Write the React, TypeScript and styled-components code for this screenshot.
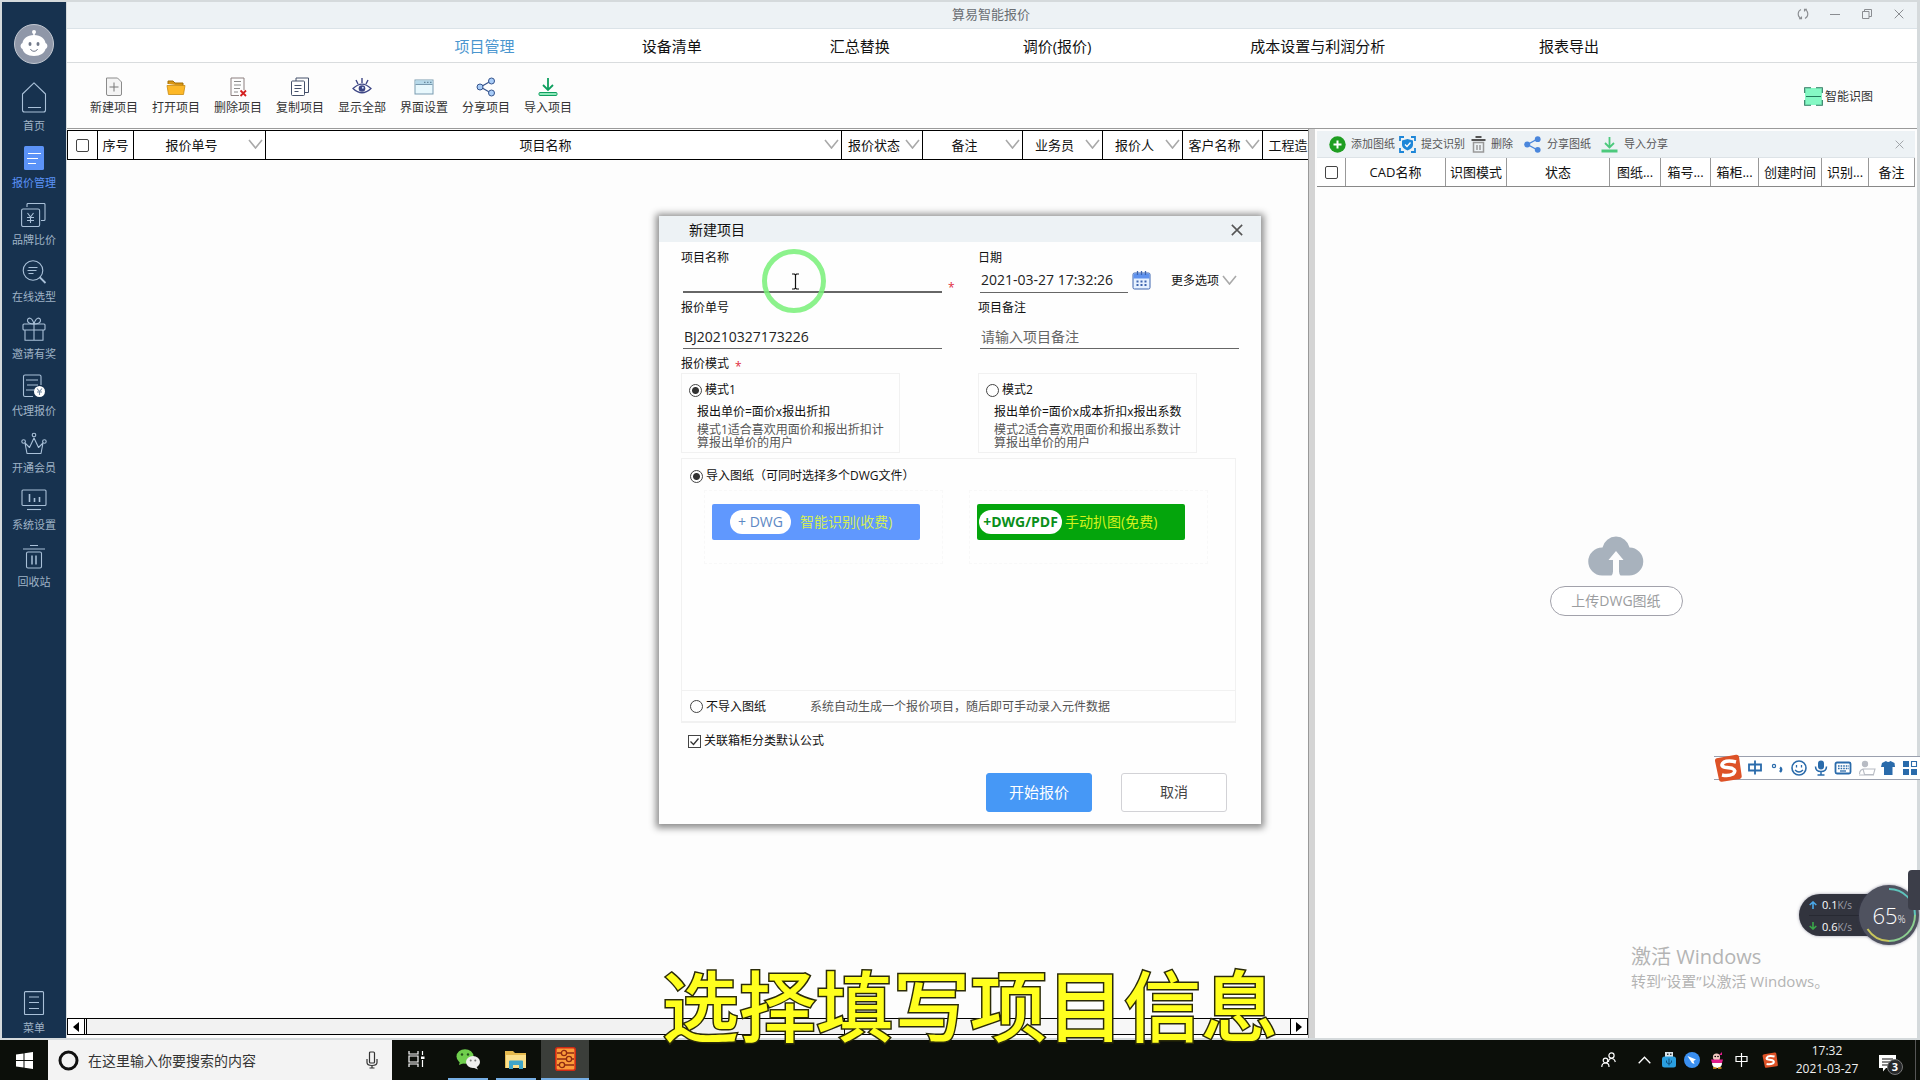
import React, { useState } from 'react';
import styled, { createGlobalStyle, css } from 'styled-components';

const GlobalStyle = createGlobalStyle`
  * { box-sizing: border-box; }
  html, body { margin: 0; padding: 0; }
  body, button, input, table {
    font-family: "Open Sans", "Noto Sans CJK SC", sans-serif;
    font-size: 12px;
    color: #111;
  }
  button { border: 0; padding: 0; background: none; cursor: pointer; }
  svg { display: block; flex: none; }
`;

/* ---------- page frame ---------- */

const Screen = styled.div`
  position: relative;
  display: flex;
  flex-direction: column;
  height: 100vh;
  overflow: hidden;
  background: #fdfdfd;
`;

const AppWindow = styled.div`
  flex: 1;
  min-height: 0;
  display: flex;
  border: 2px solid #d5dadc;
  border-right-width: 3px;
`;

const Main = styled.div`
  flex: 1;
  min-width: 0;
  display: flex;
  flex-direction: column;
  border-left: 1px solid #d5dadc;
`;

/* ---------- sidebar ---------- */

const Sidebar = styled.aside`
  width: 64px;
  display: flex;
  flex-direction: column;
  align-items: center;
  background: #17324f;
  padding: 22px 0 2px;
`;

const NavList = styled.nav`
  flex: 1;
  display: flex;
  flex-direction: column;
  align-items: center;
  margin-top: 13px;
`;

const NavItem = styled.a<{ $active?: boolean; $bottom?: boolean }>`
  height: 57px;
  width: 64px;
  display: flex;
  flex-direction: column;
  align-items: center;
  justify-content: flex-end;
  gap: 5px;
  text-decoration: none;
  font-size: 11px;
  line-height: 16px;
  color: ${(p) => (p.$active ? '#5b93f8' : '#9fb2c6')};
  ${(p) => p.$bottom && css`margin-top: auto;`}
`;

/* ---------- title, tabs, toolbar ---------- */

const TitleBar = styled.header`
  height: 27px;
  display: grid;
  grid-template-columns: 1fr auto 1fr;
  align-items: center;
  padding: 0 2px 2px 0;
  background: #edf2f5;
  border-bottom: 1px solid #dbe3e8;
`;

const AppTitle = styled.h1`
  grid-column: 2;
  margin: 0;
  font-size: 13px;
  font-weight: 400;
  line-height: 18px;
  color: #6a6e73;
`;

const WindowControls = styled.div`
  display: flex;
  justify-content: flex-end;
  color: #8a8d91;
`;

const WindowButton = styled.button`
  width: 32px;
  height: 24px;
  display: grid;
  place-items: center;
  color: inherit;
`;

const Tabs = styled.nav`
  height: 34px;
  display: grid;
  grid-template-columns: 324fr 186fr 188fr 188fr 206fr 315fr 187fr 254fr;
  align-items: center;
  border-bottom: 1px solid #d9dcde;
  background: #fff;
`;

const Tab = styled.a<{ $active?: boolean }>`
  text-align: center;
  text-decoration: none;
  font-size: 15px;
  line-height: 22px;
  color: ${(p) => (p.$active ? '#4a96cf' : '#111')};
  &:first-child { grid-column: 2; }
`;

const Toolbar = styled.div`
  height: 66px;
  display: flex;
  align-items: center;
  padding: 2px 44px 0 16px;
  border-bottom: 1px solid #9a9a9a;
`;

const ToolButton = styled.button`
  width: 62px;
  display: flex;
  flex-direction: column;
  align-items: center;
  gap: 2px;
  line-height: 17px;
  color: #333;
`;

const RecognizeButton = styled.button`
  margin-left: auto;
  display: flex;
  align-items: center;
  gap: 2px;
  line-height: 18px;
  color: #333;
`;

/* ---------- workspace ---------- */

const Workspace = styled.div`
  flex: 1;
  min-height: 0;
  display: flex;
`;

const ListPane = styled.section`
  flex: 1;
  min-width: 0;
  display: flex;
  flex-direction: column;
  justify-content: space-between;
  padding-top: 1px;
  overflow: hidden;
`;

const Splitter = styled.div`
  width: 7px;
  background: #d4d4d4;
  border-left: 1px solid #999;
`;

const ProjectTable = styled.table`
  width: calc(100% + 35px);
  table-layout: fixed;
  border-collapse: separate;
  border-spacing: 0;
  border: solid #000;
  border-width: 1px 0 1px 1px;
  background: #fff;
`;

const ProjectHead = styled.th<{ $filter?: boolean }>`
  position: relative;
  height: 28px;
  padding: 0 ${(p) => (p.$filter ? 16 : 0)}px 0 0;
  border-right: 1px solid #000;
  font-size: 13px;
  font-weight: 400;
  line-height: 18px;
  white-space: nowrap;
`;

const FilterButton = styled.button`
  position: absolute;
  right: 2px;
  top: 8px;
`;

const Check = styled.input.attrs({ type: 'checkbox' })<{ $square?: boolean }>`
  appearance: none;
  display: block;
  flex: none;
  width: 13px;
  height: 13px;
  margin: 0 ${(p) => (p.$square ? '0' : 'auto')};
  border: 1px solid #444;
  border-radius: ${(p) => (p.$square ? 0 : 2)}px;
  background: #fff;
`;

const TickBox = styled.span`
  display: grid;
  & > * { grid-area: 1 / 1; }
  svg { pointer-events: none; z-index: 1; }
`;

const ScrollBar = styled.div`
  display: flex;
  height: 17px;
  margin-bottom: 3px;
  border-top: 1px solid #000;
  border-bottom: 1px solid #000;
  background: #f1f1f1;
`;

const ScrollButton = styled.button`
  width: 18px;
  display: grid;
  place-items: center;
  border: solid #000;
  border-width: 0 1px;
  background: #fff;
`;

const ScrollTrack = styled.div`
  flex: 1;
  background: #f7f7f7;
`;

const ScrollThumb = styled.div`
  width: 63%;
  height: 100%;
  margin-left: 1px;
  border: solid #000;
  border-width: 0 1px;
  background: #f2f2f2;
`;

const DrawingPane = styled.section`
  width: 602px;
  display: flex;
  flex-direction: column;
  padding: 2px 2px 0 2px;
`;

const DrawingBar = styled.div`
  height: 27px;
  display: flex;
  align-items: center;
  padding: 0 8px 0 12px;
  background: #edf2f5;
  border-bottom: 1px solid #dde3e7;
`;

const DrawingTool = styled.button<{ $width: number; $gap: number }>`
  width: ${(p) => p.$width}px;
  display: flex;
  align-items: center;
  gap: ${(p) => p.$gap}px;
  font-size: 11px;
  line-height: 16px;
  white-space: nowrap;
  color: #555;
`;

const CloseButton = styled.button`
  margin-left: auto;
  width: 16px;
  height: 16px;
  display: grid;
  place-items: center;
`;

const DrawingTable = styled.table`
  width: 100%;
  table-layout: fixed;
  border-spacing: 0;
  border-bottom: 1px solid #888;
  background: #fff;
`;

const DrawingHead = styled.th`
  height: 28px;
  padding: 0;
  border-right: 1px solid #999;
  font-size: 13px;
  font-weight: 400;
  line-height: 18px;
  white-space: nowrap;
`;

const UploadArea = styled.div`
  flex: 1;
  display: flex;
  flex-direction: column;
  align-items: center;
  justify-content: center;
  gap: 10px;
  padding-bottom: 76px;
`;

const UploadButton = styled.button`
  width: 133px;
  height: 30px;
  border: 1px solid #a2a2ab;
  border-radius: 15px;
  background: #fff;
  font-size: 14px;
  line-height: 20px;
  color: #9b9da0;
`;

/* ---------- dialog ---------- */

const Overlay = styled.div`
  position: absolute;
  inset: 0 0 40px;
  display: grid;
  place-items: center;
  pointer-events: none;
`;

const Dialog = styled.section`
  width: 602px;
  background: #fefefe;
  box-shadow: 0 1px 7px 3px rgba(0, 0, 0, 0.45);
  pointer-events: auto;
`;

const DialogHeader = styled.header`
  height: 26px;
  display: flex;
  align-items: center;
  padding: 2px 16px 0 30px;
  background: #edf2f5;
`;

const DialogTitle = styled.h2`
  margin: 0;
  font-size: 14px;
  font-weight: 400;
  line-height: 20px;
`;

const DialogBody = styled.form`
  padding: 8px 22px 12px;
  line-height: 16px;
`;

const FieldGrid = styled.div`
  display: grid;
  grid-template-columns: 297px 1fr;
  row-gap: 7px;
`;

const Field = styled.div`
  display: flex;
  flex-direction: column;
`;

const FieldLabel = styled.label`
  line-height: 16px;
`;

const FieldRow = styled.div`
  display: flex;
  align-items: center;
  padding-left: 2px;
`;

const TextInput = styled.input<{ $width: number; $tall?: boolean; $strong?: boolean }>`
  width: ${(p) => p.$width}px;
  height: ${(p) => (p.$tall ? 33 : 27)}px;
  padding: ${(p) => (p.$tall ? 8 : 0)}px 1px 0;
  border: 0;
  border-bottom: ${(p) => (p.$strong ? 2 : 1)}px solid #666;
  outline: 0;
  background: transparent;
  font-size: 14px;
  color: #222;
  &::placeholder { color: #666; opacity: 1; }
`;

const Required = styled.span`
  display: inline-block;
  align-self: flex-end;
  height: 16px;
  padding: 0 6px;
  line-height: 22px;
  vertical-align: top;
  color: #e02a3c;
`;

const CalendarButton = styled.button`
  margin-left: 4px;
`;

const MoreButton = styled.button`
  display: flex;
  align-items: center;
  gap: 3px;
  margin-left: 20px;
`;

const ModeTitle = styled.div`
  margin-top: 7px;
`;

const ModeGrid = styled.div`
  display: grid;
  grid-template-columns: 219px 219px;
  column-gap: 78px;
  margin-top: 1px;
`;

const ModeCard = styled.div`
  height: 80px;
  padding: 8px 7px 0;
  border: 1px solid #f1f1f1;
`;

const Choice = styled.label`
  display: flex;
  align-items: center;
  gap: 3px;
  line-height: 16px;
  white-space: nowrap;
`;

const Radio = styled.input.attrs({ type: 'radio' })`
  appearance: none;
  flex: none;
  width: 13px;
  height: 13px;
  margin: 0;
  border: 1px solid #444;
  border-radius: 50%;
  background: #fff;
  &:checked { background: radial-gradient(circle, #333 3px, #fff 4px); }
`;

const Formula = styled.p`
  margin: 6px 0 3px 8px;
  white-space: nowrap;
`;

const ModeHint = styled.p`
  margin: 0 0 0 8px;
  line-height: 13px;
  color: #555;
`;

const SourceCard = styled.div`
  width: 555px;
  margin-top: 5px;
  border: 1px solid #f1f1f1;
  border-bottom-width: 2px;
`;

const ImportSection = styled.div`
  height: 231px;
  padding: 9px 0 0 8px;
`;

const DropGrid = styled.div`
  display: grid;
  grid-template-columns: 239px 239px;
  column-gap: 26px;
  margin: 6px 0 0 14px;
`;

const DropZone = styled.div`
  padding: 13px 7px 23px;
  border: 1px dashed #f8f8f8;
`;

const ImportButton = styled.button<{ $free?: boolean }>`
  width: 208px;
  height: 36px;
  display: flex;
  align-items: center;
  gap: ${(p) => (p.$free ? 3 : 9)}px;
  padding-left: ${(p) => (p.$free ? 2 : 18)}px;
  border-radius: 2px;
  background: ${(p) => (p.$free ? '#04a50c' : '#6098fe')};
  font-size: 14px;
  line-height: 20px;
  white-space: nowrap;
  color: ${(p) => (p.$free ? '#d4f21c' : '#d3ee55')};
`;

const Pill = styled.span<{ $free?: boolean }>`
  width: ${(p) => (p.$free ? 83 : 61)}px;
  height: 24px;
  border-radius: 12px;
  background: #fff;
  font-size: 14px;
  font-weight: ${(p) => (p.$free ? 700 : 400)};
  line-height: 24px;
  text-align: center;
  color: ${(p) => (p.$free ? '#0a8f1a' : '#5d88c4')};
`;

const SkipSection = styled.div`
  height: 31px;
  display: flex;
  align-items: center;
  gap: 44px;
  padding: 1px 0 0 8px;
  border-top: 1px solid #f1f1f1;
`;

const SkipHint = styled.span`
  color: #555;
`;

const LinkRow = styled.div`
  margin: 10px 0 0 7px;
`;

const Actions = styled.div`
  display: flex;
  justify-content: flex-end;
  gap: 29px;
  margin-top: 24px;
  padding-right: 12px;
`;

const ActionButton = styled.button<{ $primary?: boolean }>`
  width: 106px;
  height: 39px;
  padding-bottom: 1px;
  border: 1px solid ${(p) => (p.$primary ? '#4698f6' : '#d2d2d6')};
  border-radius: 3px;
  background: ${(p) => (p.$primary ? '#4698f6' : '#fff')};
  font-size: ${(p) => (p.$primary ? 15 : 14)}px;
  line-height: 20px;
  color: ${(p) => (p.$primary ? '#fff' : '#444')};
`;

/* ---------- floating things on the desktop ---------- */

const PointerRing = styled.div`
  position: absolute;
  left: calc(50% - 198px);
  top: calc(50% - 291px);
  width: 64px;
  height: 64px;
  display: grid;
  place-items: center;
  padding-left: 3px;
  border: 5px solid rgba(120, 240, 120, 0.85);
  border-radius: 50%;
  pointer-events: none;
`;

const ImeBar = styled.div`
  position: absolute;
  right: 0;
  top: 756px;
  height: 24px;
  display: flex;
  align-items: center;
  gap: 5px;
  padding: 0 1px 0 0;
  border: solid #9aa0ae;
  border-width: 1px 0;
  background: #fff;
  color: #2a6bab;
`;

const SpeedWidget = styled.div`
  position: absolute;
  right: 1px;
  top: 885px;
  display: flex;
  align-items: center;
`;

const SpeedPanel = styled.div`
  width: 88px;
  height: 42px;
  margin-right: -28px;
  padding: 0 0 0 10px;
  border-radius: 21px 0 0 21px;
  background: #32343e;
  box-shadow: 0 0 3px rgba(60, 60, 90, 0.5);
`;

const SpeedLine = styled.div`
  display: flex;
  align-items: center;
  gap: 5px;
  height: 21px;
  font-size: 11px;
  color: #fff;
  & + & { border-top: 1px solid #272932; }
`;

const SpeedUnit = styled.span`
  font-size: 10px;
  color: #9c9ea8;
`;

const LoadDial = styled.div`
  position: relative;
  width: 60px;
  height: 60px;
  display: flex;
  align-items: center;
  justify-content: center;
  border-radius: 50%;
  background: #4f525f;
  color: #fff;
  font-size: 22px;
  font-weight: 300;
  box-shadow: 0 0 3px rgba(60, 60, 90, 0.6);
  svg { position: absolute; inset: 0; }
  small { font-size: 10px; padding-top: 8px; }
`;

const EdgeTab = styled.div`
  position: absolute;
  right: 0;
  top: 870px;
  width: 12px;
  height: 40px;
  border-radius: 4px 0 0 4px;
  background: #3c3e49;
`;

const Watermark = styled.div`
  position: absolute;
  right: 88px;
  bottom: 88px;
  width: 201px;
  font-size: 15px;
  line-height: 22px;
  white-space: nowrap;
  color: #b4b4b4;
`;

const WatermarkTitle = styled.div`
  font-size: 20px;
  line-height: 26px;
`;

const Subtitle = styled.p`
  position: absolute;
  left: 0;
  right: 0;
  bottom: 23px;
  margin: 0;
  padding-left: 20px;
  font-family: "Noto Sans CJK SC", sans-serif;
  font-size: 77px;
  font-weight: 500;
  line-height: 108px;
  text-align: center;
  color: #ffff1e;
  -webkit-text-stroke: 3px #2b2b08;
  paint-order: stroke fill;
  pointer-events: none;
`;

/* ---------- taskbar ---------- */

const Taskbar = styled.footer`
  height: 40px;
  display: flex;
  background: #0c0f0a;
  color: #fff;
`;

const StartButton = styled.button`
  width: 48px;
  display: grid;
  place-items: center;
`;

const SearchBox = styled.label`
  width: 344px;
  display: flex;
  align-items: center;
  gap: 9px;
  padding: 0 14px 0 10px;
  background: #f3f3f3;
`;

const SearchInput = styled.input`
  flex: 1;
  min-width: 0;
  padding: 0;
  border: 0;
  background: transparent;
  font-size: 14px;
  &::placeholder { color: #333; opacity: 1; }
`;

const TaskButton = styled.button<{ $state?: 'open' | 'active' }>`
  width: ${(p) => (p.$state === 'open' ? 40 : 48)}px;
  margin-left: ${(p) => (p.$state === 'open' ? 8 : p.$state ? 5 : 0)}px;
  display: grid;
  place-items: center;
  border-bottom: 2px solid ${(p) => (p.$state ? '#76aee4' : 'transparent')};
  background: ${(p) => (p.$state === 'active' ? '#3b3e3a' : 'transparent')};
`;

const Tray = styled.div`
  margin-left: auto;
  display: flex;
  align-items: center;
`;

const TrayButton = styled.button<{ $width: number }>`
  width: ${(p) => p.$width}px;
  height: 40px;
  display: grid;
  place-items: center;
  color: #fff;
`;

const Clock = styled.time`
  width: 90px;
  font-size: 12px;
  line-height: 18px;
  text-align: center;
  color: #f0f0f0;
`;

const Notice = styled.button`
  position: relative;
  width: 43px;
  height: 40px;
  padding: 8px 0 0 7px;
`;

const Badge = styled.span`
  position: absolute;
  left: 15px;
  top: 19px;
  width: 16px;
  height: 16px;
  border: 1px solid #777;
  border-radius: 50%;
  background: #26282a;
  font-size: 11px;
  font-weight: 700;
  line-height: 14px;
  color: #fff;
`;

const DesktopEdge = styled.div`
  width: 5px;
  height: 40px;
  border-left: 1px solid #555;
`;

/* ---------- drawings ---------- */

const Chevron = () => (
  <svg width="15" height="10" viewBox="0 0 15 10" fill="none" stroke="#a9a9a9" strokeWidth="1.6">
    <path d="M1 1 7.5 9 14 1" />
  </svg>
);

const Cross = ({ size, color, width }: { size: number; color: string; width: number }) => (
  <svg width={size} height={size} viewBox="0 0 10 10" stroke={color} strokeWidth={width}>
    <path d="M.7.7 9.3 9.3M9.3.7.7 9.3" />
  </svg>
);

const Robot = () => (
  <svg width="40" height="40" viewBox="0 0 40 40">
    <circle cx="20" cy="20" r="19.5" fill="#8f97a8" stroke="#c3c9d2" />
    <path d="M20 8v6" stroke="#fff" strokeWidth="1.6" />
    <circle cx="20" cy="8" r="2" fill="#fff" />
    <path d="M20 11c7 0 11 4 11.500 8 2.500 1 2.500 5 0 6-1 4-5 7-11.500 7S9.500 29 8.500 25c-2.500-1-2.500-5 0-6C9 15 13 11 20 11z" fill="#fff" />
    <ellipse cx="16" cy="20" rx="1.500" ry="2" fill="#6f7788" />
    <ellipse cx="24" cy="20" rx="1.500" ry="2" fill="#6f7788" />
    <path d="M16.500 25c1 3 6 3 7 0" fill="none" stroke="#6f7788" />
  </svg>
);

const NavSvg = ({ children, h = 24 }: { children: React.ReactNode; h?: number }) => (
  <svg width="26" height={h} viewBox={`0 0 26 ${h}`} fill="none" stroke="#a9c0d8" strokeWidth="1.1" strokeLinejoin="round">
    {children}
  </svg>
);

const navItems = [
  {
    label: '首页',
    icon: <NavSvg h={31}><path d="M1.500 12 13 .8 24.500 12v16q0 2-2 2h-19q-2 0-2-2zM7 25.500h13" /></NavSvg>,
  },
  {
    label: '报价管理',
    active: true,
    icon: (
      <NavSvg>
        <rect x="3" y="0" width="20" height="24" rx="1.500" fill="#5b93f8" stroke="none" />
        <path d="M7 7.500h13M6 12.500h11M7 17.500h8" stroke="#fff" />
      </NavSvg>
    ),
  },
  {
    label: '品牌比价',
    icon: <NavSvg><path d="M6 4V1.500q0-1 1-1h16q1 0 1 1v15q0 1-1 1h-3" /><rect x=".6" y="6" width="18" height="17.500" rx="1.500" /><path d="M6.500 10l3 4 3-4M9.500 14v6M6 14.500h7M6 17.500h7" /></NavSvg>,
  },
  {
    label: '在线选型',
    icon: <NavSvg><circle cx="12" cy="10.500" r="9.800" /><path d="M7.500 7.500h9M6.500 10.500h9M7.500 13.500h5" /><path d="M18.500 17l6 6" strokeWidth="1.800" /></NavSvg>,
  },
  {
    label: '邀请有奖',
    icon: <NavSvg><rect x="2" y="7" width="22" height="6" rx="1" /><path d="M4 13v10.300h18V13M13 7v16.300M13 7C9 7 6 5.500 6.500 3S11-.5 13 7M13 7c4 0 7-1.500 6.500-4S15-.5 13 7" /></NavSvg>,
  },
  {
    label: '代理报价',
    icon: <NavSvg><path d="M12 22.500H4q-1.500 0-1.500-1.500V2.500Q2.500 1 4 1h14.500Q20 1 20 2.500V11" /><path d="M5 6h12M6 11h11M5 16h8" /><circle cx="18.500" cy="17.500" r="5.500" fill="#fff" stroke="none" /><path d="M16 14.500l2.500 3 2.500-3M18.500 17v4M16 18h5" stroke="#7288a0" /></NavSvg>,
  },
  {
    label: '开通会员',
    icon: <NavSvg h={23}><circle cx="13" cy="3" r="1.800" /><circle cx="2.600" cy="9.500" r="1.800" /><circle cx="23.400" cy="9.500" r="1.800" /><path d="M4 11l2 10.500h14L22 11l-4.500 4.500L13 6l-4.500 9.500z" /></NavSvg>,
  },
  {
    label: '系统设置',
    icon: <NavSvg><rect x="1" y="2" width="24" height="15.500" rx="1" /><path d="M6 21.500h14" /><path d="M8.500 6v8M13.500 10v4M18.500 9v5" strokeWidth="1.600" /></NavSvg>,
  },
  {
    label: '回收站',
    icon: <NavSvg h={25}><path d="M9 1.500h8M2 5h22" /><rect x="5.500" y="8" width="15" height="16" rx="1.500" /><path d="M11 11.500v9M15 11.500v9" strokeWidth="1.500" /></NavSvg>,
  },
];

const MenuIcon = () => (
  <NavSvg><rect x="3.500" y=".6" width="19" height="23" rx="1" /><path d="M8 6h10M8 11.500h10M8 17.500h10" /></NavSvg>
);

const ToolSvg = ({ children }: { children: React.ReactNode }) => (
  <svg width="20" height="20" viewBox="0 0 20 20" fill="none">{children}</svg>
);

const toolItems = [
  { label: '新建项目', icon: <ToolSvg><path d="M2.500 1h11l4 4v12q0 1.500-1.500 1.500H4q-1.500 0-1.500-1.500z" fill="#f4f4f4" stroke="#8b8b8b" /><path d="M10 5.500v9M5.500 10h9" stroke="#777" /></ToolSvg> },
  { label: '打开项目', icon: <ToolSvg><path d="M2 7V4h5l2 2h8v3" fill="#d99512" stroke="#a06e08" /><path d="M1 8.500h18L17.500 17.500h-15z" fill="#fdb827" stroke="#c78a10" strokeWidth=".8" /></ToolSvg> },
  { label: '删除项目', icon: <ToolSvg><path d="M3 1h13v12M11 18.500H3V1" stroke="#8b7f7f" /><path d="M6 4.500h7M6 8h7M6 11.500h6M6 15h4" stroke="#8b8b8b" /><path d="M12.500 13.500l5.500 5.500M18 13.500l-5.500 5.500" stroke="#d42020" strokeWidth="1.800" /></ToolSvg> },
  { label: '复制项目', icon: <ToolSvg><path d="M6 4V1h12.500v14.500H15" stroke="#44506a" /><rect x="1.500" y="4" width="13" height="14.500" rx="1" fill="#fff" stroke="#44506a" /><path d="M4.500 8.500h7M4.500 11.500h7M4.500 14.500h4" stroke="#44506a" /></ToolSvg> },
  { label: '显示全部', icon: <ToolSvg><path d="M1 11.500Q10 2.500 19 11.500 10 20 1 11.500z" stroke="#3c4584" strokeWidth="1.200" /><circle cx="10" cy="11.500" r="3.300" fill="#3c4584" /><circle cx="10.800" cy="10.800" r="1" fill="#cfe0ff" /><path d="M10 1v5M4 3l2 4M16 3l-2 4" stroke="#3c4584" strokeWidth="1.400" /></ToolSvg> },
  { label: '界面设置', icon: <ToolSvg><rect x="1" y="3" width="18" height="14" fill="#e8f8fd" stroke="#7a9bb0" /><path d="M1.500 7.500h17" stroke="#7a9bb0" /><rect x="1.500" y="3.500" width="17" height="3.500" fill="#b6d9ea" /><path d="M10 5.300h1.500M13 5.300h1.500M16 5.300h1.500" stroke="#55758a" /></ToolSvg> },
  { label: '分享项目', icon: <ToolSvg><path d="M15 4 4.500 10 15 16" stroke="#35538c" strokeWidth="1.200" /><circle cx="15.500" cy="4" r="3" fill="#a9cdf8" stroke="#35538c" /><circle cx="4" cy="10" r="3" fill="#a9cdf8" stroke="#35538c" /><circle cx="15.500" cy="16" r="3" fill="#a9cdf8" stroke="#35538c" /></ToolSvg> },
  { label: '导入项目', icon: <ToolSvg><path d="M10 1v11M5 8l5 5 5-5" stroke="#0f9f5f" strokeWidth="1.800" /><rect x="1" y="15.500" width="18" height="3" rx="1" fill="#8fe8bb" stroke="#0f9f5f" /></ToolSvg> },
];

const drawingTools = [
  { label: '添加图纸', width: 70, gap: 5, icon: <svg width="17" height="17" viewBox="0 0 17 17"><circle cx="8.500" cy="8.500" r="8.200" fill="#1f9e22" /><path d="M8.500 4.500v8M4.500 8.500h8" stroke="#fff" strokeWidth="2" /></svg> },
  { label: '提交识别', width: 72, gap: 5, icon: <svg width="17" height="17" viewBox="0 0 17 17" fill="none" stroke="#1d86d8" strokeWidth="1.800"><path d="M1 5V1h4M12 1h4v4M16 12v4h-4M5 16H1v-4" /><path d="M8.500 3l5.500 1.500v4.500q0 3-5.500 5.500Q3 12 3 9V4.500z" fill="#1d86d8" stroke="none" /><path d="M6 8.500l2 2 3.500-4" stroke="#fff" strokeWidth="1.300" /></svg> },
  { label: '删除', width: 53, gap: 5, icon: <svg width="15" height="17" viewBox="0 0 15 17" fill="none"><path d="M4.500 1h6M.5 4h14" stroke="#555" strokeWidth="1.800" /><path d="M2.500 6.500h10V16h-10zM6 9v5M9 9v5" stroke="#999" strokeWidth="1.500" /></svg> },
  { label: '分享图纸', width: 77, gap: 6, icon: <svg width="17" height="17" viewBox="0 0 17 17"><path d="M13.500 3 3.500 8.500l10 5.500" fill="none" stroke="#4a86dc" strokeWidth="1.400" /><circle cx="13.700" cy="3.200" r="2.900" fill="#4a86dc" /><circle cx="3.200" cy="8.500" r="3" fill="#4a86dc" /><circle cx="13.700" cy="13.800" r="2.900" fill="#4a86dc" /></svg> },
  { label: '导入分享', width: 70, gap: 6, icon: <svg width="17" height="17" viewBox="0 0 17 17" fill="none" stroke="#4cc97c"><path d="M8.500 1v10M4 7l4.500 4.500L13 7" strokeWidth="1.800" /><path d="M.5 15h16" strokeWidth="3" /></svg> },
];

const RecognizeIcon = () => (
  <svg width="19" height="19" viewBox="0 0 19 19">
    <rect x="1" y="1" width="17" height="17" rx="1.500" fill="#85f8c4" />
    <path d="M.7 6V.7H7M12 .7h6.300V6M18.300 13v5.300H12M7 18.300H.7V13M2 9.500h15" fill="none" stroke="#237a5b" strokeWidth="1.100" />
  </svg>
);

const Cloud = () => (
  <svg width="56" height="43" viewBox="0 0 56 43">
    <path d="M14.500 14.500A13.800 13.800 0 0 1 41.500 14.500 14 14 0 0 1 41 42.500h-8.500q-1.500-2-1.500-4V27h4.500L28 18l-7.500 9H25v11.500q0 2-1.500 4H14A14 14 0 0 1 14.500 14.500z" fill="#a8b2bd" />
  </svg>
);

const Calendar = () => (
  <svg width="19" height="20" viewBox="0 0 19 20">
    <rect x="1" y="3" width="17" height="16" rx="1.500" fill="#e6f1ff" stroke="#3d64ae" />
    <rect x="1.500" y="3.500" width="16" height="5" fill="#5f92ee" />
    <path d="M5.500 1v4M9.500 1v4M13.500 1v4" stroke="#3d64ae" strokeWidth="1.300" />
    <path d="M4.500 11.500h10M4.500 15h10" stroke="#3d64ae" strokeWidth="1.800" strokeDasharray="2 2" />
  </svg>
);

const SogouMark = ({ size }: { size: number }) => (
  <svg width={size} height={size} viewBox="0 0 28 28">
    <path d="M4 4 22 .8q2.500-.4 3 2L27.700 22q.3 2.500-2 3L8 27.700q-2.500.4-3-2L1 7q-.4-2.500 3-3z" fill="#dd5227" />
    <path d="M22 8Q14 6 10 8.200 5.500 12 11 13.300L18 14.300q5 2 1 5.700-4.500 2.500-11 1" fill="none" stroke="#fff" strokeWidth="3.600" />
  </svg>
);

const ImeIcons = () => (
  <svg width="172" height="20" viewBox="0 0 172 20" fill="none" stroke="#2a6bab" strokeWidth="1.800">
    <path d="M2 6.500h12v6H2zM8 2.500v14" />
    <circle cx="27" cy="8" r="1.600" strokeWidth="1.200" /><path d="M33 9.500q2.500 1.500 0 4.500" strokeWidth="2.400" />
    <circle cx="52" cy="10" r="7" strokeWidth="1.600" /><path d="M49.500 7v2.500M54.500 7v2.500M48 12q4 4 8 0" strokeWidth="1.300" />
    <rect x="71" y="2.500" width="6" height="9" rx="3" fill="#2a6bab" stroke="none" /><path d="M68.500 8.500q0 5 5.500 5t5.500-5M74 13v4M70.500 17h7" strokeWidth="1.500" />
    <rect x="88.500" y="4.500" width="15" height="11" rx="1.500" /><path d="M91 8h11M91 10.500h11" strokeDasharray="1.600 1" strokeWidth="1.300" /><path d="M93 13h6" strokeWidth="1.300" />
    <g stroke="#b8bcc4" strokeWidth="1.100"><circle cx="118" cy="6" r="2.600" fill="#b8bcc4" /><path d="M112.500 16q0-5 5.500-5h4M116 11h12l-1.500 5.500h-9zM112 17h15" /></g>
    <path d="M135 5l4-2q2 2 4.500 0l4 2 .5 4h-2.500v8h-8.500V9h-3z" fill="#2a6bab" stroke="none" />
    <path d="M156 3h6v6h-6zM156 11h6v6h-6zM164 11h6v6h-6z" fill="#2a6bab" stroke="none" /><path d="M164.500 3.500h5v5h-5z" strokeWidth="1.100" />
  </svg>
);

const projectColumns = [
  { label: '报价单号', width: 132, filter: true },
  { label: '项目名称', filter: true },
  { label: '报价状态', width: 81, filter: true },
  { label: '备注', width: 100, filter: true },
  { label: '业务员', width: 80, filter: true },
  { label: '报价人', width: 80, filter: true },
  { label: '客户名称', width: 80, filter: true },
  { label: '工程造价', width: 80, filter: true },
];

const drawingColumns = [
  { label: 'CAD名称', width: 100 },
  { label: '识图模式', width: 61 },
  { label: '状态' },
  { label: '图纸...', width: 51 },
  { label: '箱号...', width: 50 },
  { label: '箱柜...', width: 48 },
  { label: '创建时间', width: 63 },
  { label: '识别...', width: 47 },
  { label: '备注', width: 46 },
];

const tabs = ['项目管理', '设备清单', '汇总替换', '调价(报价)', '成本设置与利润分析', '报表导出'];

/* ---------- sections ---------- */

const SideNav = () => (
  <Sidebar>
    <Robot />
    <NavList>
      {navItems.map((item) => (
        <NavItem key={item.label} href="#" $active={item.active}>
          {item.icon}
          {item.label}
        </NavItem>
      ))}
      <NavItem href="#" $bottom>
        <MenuIcon />
        菜单
      </NavItem>
    </NavList>
  </Sidebar>
);

const TopBar = () => (
  <>
    <TitleBar>
      <AppTitle>算易智能报价</AppTitle>
      <WindowControls>
        <WindowButton aria-label="刷新">
          <svg width="12" height="12" viewBox="0 0 12 12" fill="none" stroke="currentColor" strokeWidth="1.100"><path d="M4 1.500A5 5 0 0 0 4 10.500M8 10.500A5 5 0 0 0 8 1.500M2 10.800h2.500V8.500M10 1.200H7.500v2.300" /></svg>
        </WindowButton>
        <WindowButton aria-label="最小化">
          <svg width="10" height="10" viewBox="0 0 10 10" stroke="currentColor"><path d="M0 5.500h10" /></svg>
        </WindowButton>
        <WindowButton aria-label="还原">
          <svg width="10" height="10" viewBox="0 0 10 10" fill="none" stroke="currentColor"><path d="M.5 2.500h6.500v7H.5zM2.500 2.500v-2h7v7H7" /></svg>
        </WindowButton>
        <WindowButton aria-label="关闭"><Cross size={10} color="#8a8d91" width={1} /></WindowButton>
      </WindowControls>
    </TitleBar>
    <Tabs>
      {tabs.map((tab, i) => <Tab key={tab} href="#" $active={i === 0}>{tab}</Tab>)}
    </Tabs>
    <Toolbar>
      {toolItems.map((item) => (
        <ToolButton key={item.label}>{item.icon}{item.label}</ToolButton>
      ))}
      <RecognizeButton><RecognizeIcon />智能识图</RecognizeButton>
    </Toolbar>
  </>
);

const ProjectList = () => (
  <ListPane>
    <ProjectTable>
      <colgroup>
        <col style={{ width: 30 }} />
        <col style={{ width: 36 }} />
        {projectColumns.map((c) => <col key={c.label} style={{ width: c.width }} />)}
      </colgroup>
      <thead>
        <tr>
          <ProjectHead><Check aria-label="全选项目" /></ProjectHead>
          <ProjectHead>序号</ProjectHead>
          {projectColumns.map((c) => (
            <ProjectHead key={c.label} $filter={c.filter}>
              {c.label}
              <FilterButton aria-label={`筛选${c.label}`}><Chevron /></FilterButton>
            </ProjectHead>
          ))}
        </tr>
      </thead>
    </ProjectTable>
    <ScrollBar>
      <ScrollButton aria-label="向左滚动"><svg width="6" height="10" viewBox="0 0 6 10"><path d="M6 0v10L0 5z" /></svg></ScrollButton>
      <ScrollTrack><ScrollThumb /></ScrollTrack>
      <ScrollButton aria-label="向右滚动"><svg width="6" height="10" viewBox="0 0 6 10"><path d="M0 0v10l6-5z" /></svg></ScrollButton>
    </ScrollBar>
  </ListPane>
);

const DrawingList = () => (
  <DrawingPane>
    <DrawingBar>
      {drawingTools.map((t) => (
        <DrawingTool key={t.label} $width={t.width} $gap={t.gap}>{t.icon}{t.label}</DrawingTool>
      ))}
      <CloseButton aria-label="关闭图纸栏"><Cross size={9} color="#9a9da1" width={1} /></CloseButton>
    </DrawingBar>
    <DrawingTable>
      <colgroup>
        <col style={{ width: 29 }} />
        {drawingColumns.map((c) => <col key={c.label} style={{ width: c.width }} />)}
      </colgroup>
      <thead>
        <tr>
          <DrawingHead><Check aria-label="全选图纸" /></DrawingHead>
          {drawingColumns.map((c) => <DrawingHead key={c.label}>{c.label}</DrawingHead>)}
        </tr>
      </thead>
    </DrawingTable>
    <UploadArea>
      <Cloud />
      <UploadButton>上传DWG图纸</UploadButton>
    </UploadArea>
  </DrawingPane>
);

const NewProjectDialog = () => {
  const [mode, setMode] = useState(1);
  const [importing, setImporting] = useState(true);
  const [linked, setLinked] = useState(true);
  return (
    <Dialog role="dialog" aria-labelledby="dialog-title">
      <DialogHeader>
        <DialogTitle id="dialog-title">新建项目</DialogTitle>
        <CloseButton aria-label="关闭"><Cross size={12} color="#555" width={1.3} /></CloseButton>
      </DialogHeader>
      <DialogBody onSubmit={(e) => e.preventDefault()}>
        <FieldGrid>
          <Field>
            <FieldLabel htmlFor="name">项目名称</FieldLabel>
            <FieldRow><TextInput id="name" $width={259} $strong /><Required>*</Required></FieldRow>
          </Field>
          <Field>
            <FieldLabel htmlFor="date">日期</FieldLabel>
            <FieldRow>
              <TextInput id="date" $width={148} defaultValue="2021-03-27 17:32:26" />
              <CalendarButton type="button" aria-label="选择日期"><Calendar /></CalendarButton>
              <MoreButton type="button">更多选项<Chevron /></MoreButton>
            </FieldRow>
          </Field>
          <Field>
            <FieldLabel htmlFor="number">报价单号</FieldLabel>
            <FieldRow><TextInput id="number" $width={259} $tall defaultValue="BJ20210327173226" /></FieldRow>
          </Field>
          <Field>
            <FieldLabel htmlFor="remark">项目备注</FieldLabel>
            <FieldRow><TextInput id="remark" $width={259} $tall placeholder="请输入项目备注" /></FieldRow>
          </Field>
        </FieldGrid>
        <ModeTitle>报价模式<Required>*</Required></ModeTitle>
        <ModeGrid>
          <ModeCard>
            <Choice><Radio name="mode" checked={mode === 1} onChange={() => setMode(1)} />模式1</Choice>
            <Formula>报出单价=面价x报出折扣</Formula>
            <ModeHint>模式1适合喜欢用面价和报出折扣计算报出单价的用户</ModeHint>
          </ModeCard>
          <ModeCard>
            <Choice><Radio name="mode" checked={mode === 2} onChange={() => setMode(2)} />模式2</Choice>
            <Formula>报出单价=面价x成本折扣x报出系数</Formula>
            <ModeHint>模式2适合喜欢用面价和报出系数计算报出单价的用户</ModeHint>
          </ModeCard>
        </ModeGrid>
        <SourceCard>
          <ImportSection>
            <Choice><Radio name="source" checked={importing} onChange={() => setImporting(true)} />导入图纸（可同时选择多个DWG文件）</Choice>
            <DropGrid>
              <DropZone><ImportButton type="button"><Pill>+ DWG</Pill>智能识别(收费)</ImportButton></DropZone>
              <DropZone><ImportButton type="button" $free><Pill $free>+DWG/PDF</Pill>手动扒图(免费)</ImportButton></DropZone>
            </DropGrid>
          </ImportSection>
          <SkipSection>
            <Choice><Radio name="source" checked={!importing} onChange={() => setImporting(false)} />不导入图纸</Choice>
            <SkipHint>系统自动生成一个报价项目，随后即可手动录入元件数据</SkipHint>
          </SkipSection>
        </SourceCard>
        <LinkRow>
          <Choice>
            <TickBox>
              <Check $square checked={linked} onChange={() => setLinked(!linked)} />
              {linked && <svg width="13" height="13" viewBox="0 0 13 13" fill="none" stroke="#333" strokeWidth="1.300"><path d="M2.500 6.500l3 3 5-6" /></svg>}
            </TickBox>
            关联箱柜分类默认公式
          </Choice>
        </LinkRow>
        <Actions>
          <ActionButton $primary>开始报价</ActionButton>
          <ActionButton type="button">取消</ActionButton>
        </Actions>
      </DialogBody>
    </Dialog>
  );
};

const SystemTaskbar = () => (
  <Taskbar>
    <StartButton aria-label="开始">
      <svg width="17" height="17" viewBox="0 0 17 17" fill="#fff"><path d="M0 2.500 7.500 1.400V8H0zM8.500 1.300 17 0v8H8.500zM0 9h7.500v6.600L0 14.500zM8.500 9H17v8l-8.500-1.300z" /></svg>
    </StartButton>
    <SearchBox>
      <svg width="21" height="21" viewBox="0 0 21 21"><circle cx="10.500" cy="10.500" r="8.500" fill="none" stroke="#111" strokeWidth="3" /></svg>
      <SearchInput placeholder="在这里输入你要搜索的内容" aria-label="搜索" />
      <svg width="12" height="18" viewBox="0 0 12 18" fill="none" stroke="#333" strokeWidth="1.200"><rect x="3.500" y="1" width="5" height="11" rx="1" /><path d="M1 8v3.500q0 3 5 3t5-3V8M6 14.500V17M3.500 17h5" /></svg>
    </SearchBox>
    <TaskButton aria-label="任务视图">
      <svg width="17" height="16" viewBox="0 0 17 16" fill="none" stroke="#fff" strokeWidth="1.200"><path d="M1 0v3h9V0M1 16v-3h9v3M1 5h9v6H1zM14.500 0v4M14.500 9v7" /><path d="M13 5.500h3.500v2.500H13z" fill="#fff" stroke="none" /></svg>
    </TaskButton>
    <TaskButton $state="open" aria-label="微信">
      <svg width="25" height="21" viewBox="0 0 25 21"><ellipse cx="9" cy="7.500" rx="8.500" ry="7.300" fill="#6fce4d" /><path d="M4 12l-1 4 5-2z" fill="#6fce4d" /><circle cx="6" cy="5.500" r="1.200" fill="#24521a" /><circle cx="12" cy="5.500" r="1.200" fill="#24521a" /><ellipse cx="17" cy="13" rx="7" ry="6" fill="#eee" /><path d="M20 17l2 3.500-5-2z" fill="#eee" /><circle cx="14.700" cy="11.500" r="1" fill="#777" /><circle cx="19.300" cy="11.500" r="1" fill="#777" /></svg>
    </TaskButton>
    <TaskButton $state="open" aria-label="文件资源管理器">
      <svg width="22" height="19" viewBox="0 0 22 19"><path d="M0 1h8l2 2h11v15H0z" fill="#e5b94e" /><path d="M1 5h20v13H1z" fill="#fbdf8c" /><path d="M4 19v-7.500q0-1 1-1h12q1 0 1 1V19h-4v-4H8v4z" fill="#3fa5c8" /></svg>
    </TaskButton>
    <TaskButton $state="active" aria-label="算易智能报价">
      <svg width="21" height="24" viewBox="0 0 21 24"><rect x=".8" y=".8" width="19.400" height="22.400" rx="2" fill="#fb9c3a" stroke="#cf2a14" strokeWidth="1.600" /><g fill="#fb9c3a" stroke="#8f2a12" strokeWidth="1.300"><path d="M2 6h17M2 12h17M2 18h17" /><circle cx="9" cy="6" r="2.600" /><circle cx="14" cy="12" r="2.600" /><circle cx="7" cy="18" r="2.600" /></g></svg>
    </TaskButton>
    <Tray>
      <TrayButton $width={36} aria-label="人脉">
        <svg width="15" height="16" viewBox="0 0 15 16" fill="none" stroke="#fff" strokeWidth="1.200"><circle cx="10.500" cy="3.500" r="2.600" /><path d="M7.500 10q0-3.500 3-3.500t3.800 3.500" /><circle cx="4.500" cy="8.500" r="2.300" /><path d="M.8 15q0-4 3.700-4T8 15" /></svg>
      </TrayButton>
      <TrayButton $width={36} aria-label="显示隐藏的图标">
        <svg width="13" height="8" viewBox="0 0 13 8" fill="none" stroke="#fff" strokeWidth="1.300"><path d="M.7 7.200 6.500 1.200l5.800 6" /></svg>
      </TrayButton>
      <TrayButton $width={12} aria-label="USB 设备">
        <svg width="14" height="16" viewBox="0 0 14 16"><path d="M3 0h8v5H3z" fill="#d9e4ea" /><path d="M5 1.500h1.500v1.500H5zM8 1.500h1.500v1.500H8z" fill="#333" /><rect x="0" y="4.500" width="14" height="11" rx="2.500" fill="#2a9fe0" /><path d="M7 6.500v7M4.500 8.500v2L7 12l2.500-1.500v-2" fill="none" stroke="#0c4f80" /></svg>
      </TrayButton>
      <TrayButton $width={36} aria-label="钉钉">
        <svg width="16" height="16" viewBox="0 0 16 16"><circle cx="8" cy="8" r="8" fill="#3a8ff0" /><path d="M3.500 4 12 7.500 9.500 9l1 3L8 11z" fill="#fff" /></svg>
      </TrayButton>
      <TrayButton $width={14} aria-label="助手">
        <svg width="14" height="17" viewBox="0 0 14 17"><ellipse cx="7" cy="11.500" rx="5" ry="4.500" fill="#fff" /><circle cx="6.500" cy="5" r="3.600" fill="#f3c9c0" /><path d="M1 7.500h12l-1 3.500H2zM9 3l3-3v3z" fill="#e01d8b" /><circle cx="5.200" cy="4.500" r=".8" /><circle cx="8" cy="4.500" r=".8" /><path d="M3 16h3.500M8 16h3.500" stroke="#f0a020" strokeWidth="1.500" /></svg>
      </TrayButton>
      <TrayButton $width={34} aria-label="输入法">
        <svg width="13" height="14" viewBox="0 0 13 14" fill="none" stroke="#fff" strokeWidth="1.200"><path d="M1 3.500h11v5H1zM6.500 0v14" /></svg>
      </TrayButton>
      <TrayButton $width={24} aria-label="搜狗输入法"><SogouMark size={16} /></TrayButton>
      <Clock>17:32<br />2021-03-27</Clock>
      <Notice aria-label="通知">
        <svg width="18" height="18" viewBox="0 0 18 18"><path d="M0 0h17v13H7l-3 3.500V13H0z" fill="#fff" /><path d="M3 4h11M3 7h11M3 10h7" stroke="#111" strokeWidth="1.200" /></svg>
        <Badge>3</Badge>
      </Notice>
      <DesktopEdge />
    </Tray>
  </Taskbar>
);

export default function App() {
  return (
    <Screen>
      <GlobalStyle />
      <AppWindow>
        <SideNav />
        <Main>
          <TopBar />
          <Workspace>
            <ProjectList />
            <Splitter />
            <DrawingList />
          </Workspace>
        </Main>
      </AppWindow>
      <SystemTaskbar />
      <Overlay><NewProjectDialog /></Overlay>
      <PointerRing>
        <svg width="9" height="17" viewBox="0 0 9 17" fill="none" stroke="#111" strokeWidth="1.200"><path d="M1 1h2.500l1 1 1-1H8M4.500 2v13M1 16h2.500l1-1 1 1H8" /></svg>
      </PointerRing>
      <Watermark>
        <WatermarkTitle>激活 Windows</WatermarkTitle>
        转到“设置”以激活 Windows。
      </Watermark>
      <ImeBar><SogouMark size={28} /><ImeIcons /></ImeBar>
      <SpeedWidget>
        <SpeedPanel>
          <SpeedLine><svg width="8" height="8" viewBox="0 0 8 8" fill="none" stroke="#4aa8e8" strokeWidth="1.600"><path d="M4 8V1M.7 4 4 1l3.300 3" /></svg><span>0.1<SpeedUnit>K/s</SpeedUnit></span></SpeedLine>
          <SpeedLine><svg width="8" height="8" viewBox="0 0 8 8" fill="none" stroke="#3aa84a" strokeWidth="1.600"><path d="M4 0v7M.7 4 4 7l3.300-3" /></svg><span>0.6<SpeedUnit>K/s</SpeedUnit></span></SpeedLine>
        </SpeedPanel>
        <LoadDial>
          <svg width="60" height="60" viewBox="0 0 60 60" fill="none" strokeWidth="2">
            <path d="M30 4A26 26 0 0 1 56 30" stroke="#5ec4bc" />
            <path d="M56 30A26 26 0 0 1 30 56" stroke="#8ccf90" />
            <path d="M30 56A26 26 0 0 1 8.500 44" stroke="#c8c65c" />
          </svg>
          65<small>%</small>
        </LoadDial>
      </SpeedWidget>
      <EdgeTab />
      <Subtitle>选择填写项目信息</Subtitle>
    </Screen>
  );
}
